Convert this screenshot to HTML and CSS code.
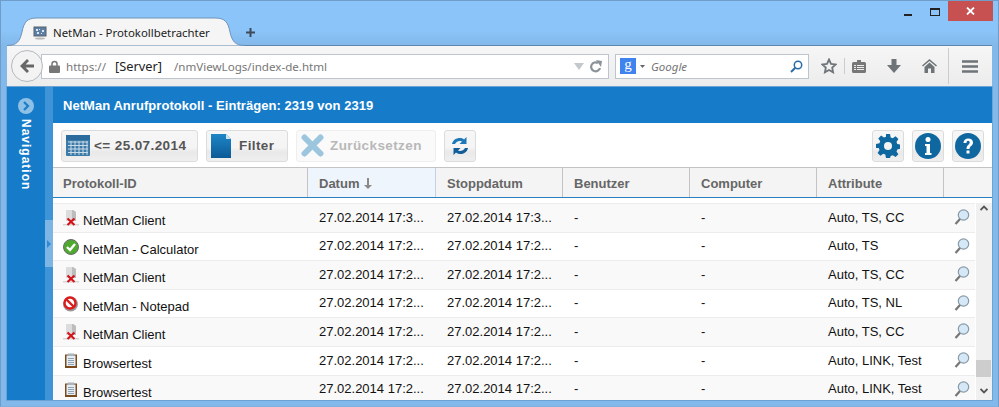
FILE: index.html
```html
<!DOCTYPE html>
<html>
<head>
    <title>NetMan - Protokollbetrachter</title>
    <link rel="stylesheet" href="styles.css">
</head>
<body>
    <div class="window">
        <div class="titlebar">
            <div class="tab">
                <svg class="tab-shape" width="238" height="29" viewBox="0 0 238 29"><path d="M0 28.500C10 28.500 13 24 15 15C17 5 20 1 30 1H208C218 1 221 5 223 15C225 24 228 28.500 238 28.500" fill="#f5f5f5" stroke="#6f94bb"/></svg>
                <svg class="tab-icon" width="14" height="14" viewBox="0 0 14 14"><rect x="1" y="1" width="12" height="9" fill="#5c7fa3" stroke="#56606c"/><path d="M3 3h2v2H3zM6 3h1v1H6zM9 4h2v2H9zM4 6h2v2H4zM8 7h1v1H8z" fill="#dbe7f4"/><ellipse cx="7" cy="12.500" rx="5" ry="1" fill="#b8b8b8"/></svg>
                <span class="tab-title">NetMan - Protokollbetrachter</span>
            </div>
            <svg class="new-tab" width="11" height="11" viewBox="0 0 11 11"><path d="M5.500 1v9M1 5.500h9" stroke="#3f4b59" stroke-width="2"/></svg>
            <div class="winbtns">
                <svg class="win-min" width="8" height="2" viewBox="0 0 8 2"><rect width="8" height="2" fill="#222"/></svg>
                <svg class="win-max" width="10" height="8" viewBox="0 0 10 8"><rect x=".5" y=".5" width="9" height="7" fill="none" stroke="#222"/><rect x="0" y="0" width="10" height="2" fill="#222"/></svg>
                <div class="win-close">
                    <svg width="9" height="8" viewBox="0 0 9 8"><path d="M1 .5l7 7M8 .5l-7 7" stroke="#fff" stroke-width="1.800"/></svg>
                </div>
            </div>
        </div>

        <div class="navbar">
            <div class="back-btn">
                <svg width="16" height="14" viewBox="0 0 16 14"><path d="M8 0L1 7l7 7 2-2-3.500-3.500H15v-3H6.500L10 2z" fill="#666"/></svg>
            </div>
            <div class="urlbar">
                <svg class="lock" width="11" height="13" viewBox="0 0 11 13"><path d="M3 6V4a2.500 2.500 0 0 1 5 0v2" fill="none" stroke="#777" stroke-width="1.500"/><rect y="5.500" width="11" height="7.500" rx="1" fill="#777"/></svg>
                <span class="url-scheme">https://</span>
                <span class="url-host">[Server]</span>
                <span class="url-path">/nmViewLogs/index-de.html</span>
                <span class="url-spacer"></span>
                <svg width="10" height="7" viewBox="0 0 10 7"><path d="M0 0h10L5 7z" fill="#c3c8cd"/></svg>
                <svg class="reload" width="12" height="13" viewBox="0 0 12 13"><path d="M10 8a4.500 4.500 0 1 1-2-5" fill="none" stroke="#8b9298" stroke-width="2.200"/><path d="M6 0l6 1-1 6z" fill="#8b9298"/></svg>
            </div>
            <div class="searchbar">
                <span class="g-logo">g</span>
                <svg class="g-arrow" width="5" height="3" viewBox="0 0 5 3"><path d="M0 0h5L2.500 3z" fill="#666"/></svg>
                <span class="search-text">Google</span>
                <span class="url-spacer"></span>
                <svg width="13" height="13" viewBox="0 0 13 13"><circle cx="8" cy="5" r="3.700" fill="none" stroke="#2a6ca8" stroke-width="1.500"/><path d="M5.300 7.700L1 12" stroke="#2a6ca8" stroke-width="2"/></svg>
            </div>
            <svg class="tool star" width="16" height="16" viewBox="0 0 16 16"><path d="M8 1.500l2 4.300 4.700.6-3.500 3.200.9 4.700L8 12l-4.100 2.300.9-4.700L1.300 6.400 6 5.800z" fill="none" stroke="#6f7479" stroke-width="1.800"/></svg>
            <span class="tool-sep"></span>
            <svg class="tool clip" width="14" height="13" viewBox="0 0 14 13"><path d="M1.500 2H5V0h4v2h3.500A1.500 1.500 0 0 1 14 3.500v8a1.500 1.500 0 0 1-1.500 1.500h-11A1.500 1.500 0 0 1 0 11.500v-8A1.500 1.500 0 0 1 1.500 2z" fill="#777"/><path d="M2 5h2v1H2zM5 5h7v1H5zM2 7h2v1H2zM5 7h7v1H5zM2 9h2v1H2zM5 9h7v1H5z" fill="#eee"/></svg>
            <svg class="tool down" width="14" height="14" viewBox="0 0 14 14"><path d="M4.500 0h5v6H14l-7 8-7-8h4.500z" fill="#6f7479"/></svg>
            <svg class="tool home" width="15" height="14" viewBox="0 0 15 14"><path d="M7.500 0L15 6.500l-1 1-6.500-5.500L1 7.500l-1-1zM2.500 8l5-4.500 5 4.500v6H9V9.500H6V14H2.500z" fill="#6f7479"/></svg>
            <span class="tool-sep tall"></span>
            <svg class="tool menu" width="16" height="13" viewBox="0 0 16 13"><path d="M0 1.500h16M0 6.500h16M0 11.500h16" stroke="#6f7479" stroke-width="2.600"/></svg>
        </div>

        <div class="page">
            <div class="nav-panel">
                <svg class="nav-expand" width="16" height="16" viewBox="0 0 16 16"><circle cx="8" cy="8" r="8" fill="#8fc0e6"/><path d="M6 4l4 4-4 4" fill="none" stroke="#1a7ecb" stroke-width="2.200"/></svg>
                <span class="nav-label">Navigation</span>
            </div>
            <div class="splitter">
                <div class="split-handle">
                    <svg width="4" height="8" viewBox="0 0 4 8"><path d="M0 0l4 4-4 4z" fill="#2f8bd0"/></svg>
                </div>
            </div>
            <div class="main">
                <div class="main-title">NetMan Anrufprotokoll - Einträgen: 2319 von 2319</div>
                <div class="toolbar">
                    <button class="btn btn-date">
                        <svg width="24" height="21" viewBox="0 0 24 21"><rect width="24" height="21" rx="1" fill="#3c7aa8"/><rect width="24" height="5" fill="#2a6a9c"/><path d="M2 7h20M2 10.500h20M2 14h20M2 17.500h20M5 6v14M9 6v14M13 6v14M17 6v14M21 6v14" stroke="#c9dcea" stroke-width="1"/></svg>
                        &lt;= 25.07.2014
                    </button>
                    <button class="btn btn-filter">
                        <svg width="20" height="24" viewBox="0 0 20 24"><defs><linearGradient id="fg" x1="0" y1="0" x2="0" y2="1"><stop offset="0" stop-color="#1f86c6"/><stop offset="1" stop-color="#0b5a96"/></linearGradient></defs><path d="M0 0h15l5 5v19H0z" fill="url(#fg)"/><path d="M15 0l5 5h-5z" fill="#cfe2f0"/></svg>
                        Filter
                    </button>
                    <button class="btn btn-reset">
                        <svg width="23" height="23" viewBox="0 0 23 23"><path d="M3.500 3.500l16 16M19.500 3.500l-16 16" stroke="#9cc5de" stroke-width="6" stroke-linecap="round"/></svg>
                        Zurücksetzen
                    </button>
                    <button class="btn btn-icon">
                        <svg width="20" height="20" viewBox="0 0 20 20"><path d="M2 8C3 4 6 2 10 2c2 0 3 .6 4 1.400L16.500 1v7h-7l2.500-2.500C11 5 10.500 5 10 5 7.800 5 6 6 5 8z" fill="#1d78b8"/><path d="M18 12c-1 4-4 6-8 6-2 0-3-.6-4-1.400L3.500 19v-7h7L8 14.500c1 .5 1.500.5 2 .5 2.200 0 4-1 5-3z" fill="#0f5d99"/></svg>
                    </button>
                    <span class="toolbar-gap"></span>
                    <button class="btn btn-icon">
                        <svg width="24" height="24" viewBox="0 0 24 24"><path fill="#0f679f" fill-rule="evenodd" d="M10 0h4l.7 3.400 2 .8 2.900-1.900 2.800 2.800-1.900 2.900.8 2 3.400.7v4l-3.400.7-.8 2 1.900 2.900-2.800 2.800-2.900-1.900-2 .8L14 24h-4l-.7-3.400-2-.8-2.900 1.900-2.800-2.800 1.900-2.900-.8-2L0 14v-4l3.400-.7.800-2-1.900-2.900 2.800-2.800 2.900 1.900 2-.8zM12 8a4 4 0 1 0 0 8 4 4 0 0 0 0-8z"/></svg>
                    </button>
                    <button class="btn btn-icon">
                        <svg width="26" height="26" viewBox="0 0 26 26"><circle cx="13" cy="13" r="13" fill="#0f679f"/><circle cx="13" cy="6.500" r="2.500" fill="#fff"/><path d="M10 11h5v9h1.500v2h-6.500v-2h1.500v-7H10z" fill="#fff"/></svg>
                    </button>
                    <button class="btn btn-icon">
                        <svg width="26" height="26" viewBox="0 0 26 26"><circle cx="13" cy="13" r="13" fill="#0f679f"/><path d="M8.500 10c0-3 2-4.500 4.700-4.500S18 7 18 9.500c0 3.500-3.500 3.500-3.500 6.500h-3c0-4 3.200-4.500 3.200-6.500 0-1-.6-1.700-1.600-1.700-1.100 0-1.600.8-1.600 2.200z" fill="#fff"/><rect x="11.500" y="17.500" width="3" height="3" fill="#fff"/></svg>
                    </button>
                </div>
                <div class="thead">
                    <div class="th col-id">Protokoll-ID</div>
                    <div class="th col-date sorted">Datum
                        <svg width="10" height="11" viewBox="0 0 10 11"><path d="M4 0h2v7h3l-4 4-4-4h3z" fill="#8a8a8a"/></svg>
                    </div>
                    <div class="th col-date">Stoppdatum</div>
                    <div class="th col-date">Benutzer</div>
                    <div class="th col-date">Computer</div>
                    <div class="th col-date">Attribute</div>
                    <div class="th col-rest"></div>
                </div>
                <div class="tbody">
                    <div class="rows">
                        <div class="row alt tall">
                            <div class="td col-id"><svg width="16" height="16" viewBox="0 0 16 16"><use href="#ic-client"/></svg><span>NetMan Client</span></div>
                            <div class="td col-date">27.02.2014 17:3...</div><div class="td col-date">27.02.2014 17:3...</div><div class="td col-date">-</div><div class="td col-date">-</div><div class="td col-date">Auto, TS, CC</div>
                            <div class="td col-lens"><svg width="16" height="16" viewBox="0 0 16 16"><use href="#ic-lens"/></svg></div>
                        </div>
                        <div class="row">
                            <div class="td col-id"><svg width="16" height="16" viewBox="0 0 16 16"><use href="#ic-ok"/></svg><span>NetMan - Calculator</span></div>
                            <div class="td col-date">27.02.2014 17:2...</div><div class="td col-date">27.02.2014 17:2...</div><div class="td col-date">-</div><div class="td col-date">-</div><div class="td col-date">Auto, TS</div>
                            <div class="td col-lens"><svg width="16" height="16" viewBox="0 0 16 16"><use href="#ic-lens"/></svg></div>
                        </div>
                        <div class="row alt tall">
                            <div class="td col-id"><svg width="16" height="16" viewBox="0 0 16 16"><use href="#ic-client"/></svg><span>NetMan Client</span></div>
                            <div class="td col-date">27.02.2014 17:2...</div><div class="td col-date">27.02.2014 17:2...</div><div class="td col-date">-</div><div class="td col-date">-</div><div class="td col-date">Auto, TS, CC</div>
                            <div class="td col-lens"><svg width="16" height="16" viewBox="0 0 16 16"><use href="#ic-lens"/></svg></div>
                        </div>
                        <div class="row">
                            <div class="td col-id"><svg width="16" height="16" viewBox="0 0 16 16"><use href="#ic-stop"/></svg><span>NetMan - Notepad</span></div>
                            <div class="td col-date">27.02.2014 17:2...</div><div class="td col-date">27.02.2014 17:2...</div><div class="td col-date">-</div><div class="td col-date">-</div><div class="td col-date">Auto, TS, NL</div>
                            <div class="td col-lens"><svg width="16" height="16" viewBox="0 0 16 16"><use href="#ic-lens"/></svg></div>
                        </div>
                        <div class="row alt tall">
                            <div class="td col-id"><svg width="16" height="16" viewBox="0 0 16 16"><use href="#ic-client"/></svg><span>NetMan Client</span></div>
                            <div class="td col-date">27.02.2014 17:2...</div><div class="td col-date">27.02.2014 17:2...</div><div class="td col-date">-</div><div class="td col-date">-</div><div class="td col-date">Auto, TS, CC</div>
                            <div class="td col-lens"><svg width="16" height="16" viewBox="0 0 16 16"><use href="#ic-lens"/></svg></div>
                        </div>
                        <div class="row tall">
                            <div class="td col-id"><svg width="16" height="16" viewBox="0 0 16 16"><use href="#ic-clip"/></svg><span>Browsertest</span></div>
                            <div class="td col-date">27.02.2014 17:2...</div><div class="td col-date">27.02.2014 17:2...</div><div class="td col-date">-</div><div class="td col-date">-</div><div class="td col-date">Auto, LINK, Test</div>
                            <div class="td col-lens"><svg width="16" height="16" viewBox="0 0 16 16"><use href="#ic-lens"/></svg></div>
                        </div>
                        <div class="row alt">
                            <div class="td col-id"><svg width="16" height="16" viewBox="0 0 16 16"><use href="#ic-clip"/></svg><span>Browsertest</span></div>
                            <div class="td col-date">27.02.2014 17:2...</div><div class="td col-date">27.02.2014 17:2...</div><div class="td col-date">-</div><div class="td col-date">-</div><div class="td col-date">Auto, LINK, Test</div>
                            <div class="td col-lens"><svg width="16" height="16" viewBox="0 0 16 16"><use href="#ic-lens"/></svg></div>
                        </div>
                    </div>
                    <div class="scrollbar">
                        <svg width="8" height="6" viewBox="0 0 8 6"><path d="M.5 5L4 1.500 7.500 5" fill="none" stroke="#555" stroke-width="1.800"/></svg>
                        <div class="scroll-thumb"></div>
                        <svg width="8" height="6" viewBox="0 0 8 6"><path d="M.5 1L4 4.500 7.500 1" fill="none" stroke="#555" stroke-width="1.800"/></svg>
                    </div>
                </div>
            </div>
        </div>
    </div>

    <!-- Symbole fuer die Tabelle -->
    <svg class="defs" width="0" height="0">
        <symbol id="ic-client" viewBox="0 0 16 16">
            <path d="M3 0h7l3 2v9H3z" fill="#dcdcdc"/><path d="M9 0h1l3 2v9H9z" fill="#bdbdbd"/><path d="M0 14h16v1.500H0z" fill="#d6d6d6"/>
            <path d="M4.500 8.500l7 6.500M11.500 8.500l-7 6.500" stroke="#d3121a" stroke-width="2.200"/>
        </symbol>
        <symbol id="ic-ok" viewBox="0 0 16 16">
            <circle cx="8" cy="8" r="7.500" fill="#4fa92f" stroke="#6b6b6b"/><path d="M4 8l3 3 5-6" fill="none" stroke="#fff" stroke-width="2.400"/>
        </symbol>
        <symbol id="ic-stop" viewBox="0 0 16 16">
            <circle cx="7.500" cy="8" r="7.500" fill="#9a9a9a"/><circle cx="7" cy="7" r="5.500" fill="#fff" stroke="#dc1c1c" stroke-width="2.400"/><path d="M3 3l8 8" stroke="#dc1c1c" stroke-width="2.400"/>
        </symbol>
        <symbol id="ic-clip" viewBox="0 0 16 16">
            <rect x="2" y="1.500" width="12" height="13.500" fill="#7a4a1c"/><rect x="3.500" y="2.500" width="9" height="10.500" fill="#e6edf3"/><path d="M5 5.500h6M5 7.500h6M5 9.500h6M5 11.500h6" stroke="#8fa3b3"/><rect x="5" y="0.500" width="6" height="2.500" fill="#a9b4bd"/>
        </symbol>
        <symbol id="ic-lens" viewBox="0 0 16 16">
            <circle cx="9.500" cy="6" r="5.200" fill="#d5e8f8" stroke="#8a9aa6" stroke-width="1.200"/><path d="M6 10L1.500 15" stroke="#777" stroke-width="2.200"/>
        </symbol>
    </svg>
</body>
</html>
```

FILE: styles.css
```css
* {
    box-sizing: border-box;
}

html, body {
    margin: 0;
    height: 100%;
    overflow: hidden;
}

body {
    background-color: #8bc4f8;
    font-family: "Liberation Sans", Arial, sans-serif;
}

.defs {
    display: block;
    height: 0;
}

.window {
    display: flex;
    flex-direction: column;
    width: 999px;
    height: 407px;
    padding: 0 6px 6px 6px;
    border: 1px solid #6f9cc9;
    border-bottom-color: #7fb0de;
    background: linear-gradient(#8bc4f8 0, #8bc4f8 30px, #83b8ea 44px);
}

.window svg {
    flex: none;
}

/* Titelleiste */
.titlebar {
    display: flex;
    align-items: flex-start;
    height: 44px;
    flex: none;
    padding-top: 16px;
    margin-right: -1px;
}

.tab {
    position: relative;
    display: flex;
    align-items: center;
    width: 238px;
    height: 29px;
    padding: 2px 0 0 26px;
    z-index: 1;
}

.tab-shape {
    position: absolute;
    top: 0;
    left: 0;
}

.tab-icon, .tab-title {
    position: relative;
}

.tab-title {
    margin-left: 6px;
    font-family: "Noto Sans", sans-serif;
    font-size: 11.400px;
    color: #1c1c1c;
    white-space: nowrap;
}

.new-tab {
    margin: 10px 0 0 0;
}

.winbtns {
    display: flex;
    align-items: flex-start;
    margin: -16px 0 0 auto;
}

.win-min {
    margin: 13px 18px 0 0;
}

.win-max {
    margin: 7px 8px 0 0;
}

.win-close {
    display: flex;
    align-items: center;
    justify-content: center;
    width: 45px;
    height: 20px;
    background-color: #c75050;
}

/* Navigationsleiste */
.navbar {
    display: flex;
    align-items: center;
    flex: none;
    height: 42px;
    padding-left: 4px;
    background: linear-gradient(#f6f6f6, #ececec);
    border-top: 1px solid #5f86ad;
    border-bottom: 1px solid #a9adb1;
}

.back-btn {
    display: flex;
    align-items: center;
    justify-content: center;
    width: 32px;
    height: 32px;
    flex: none;
    border: 1px solid #b5b9bd;
    border-radius: 50%;
    background-color: #f3f3f3;
    position: relative;
    z-index: 1;
}

.urlbar, .searchbar {
    display: flex;
    align-items: center;
    height: 25px;
    background-color: #fff;
    border: 1px solid #bcc5cd;
}

.urlbar {
    width: 568px;
    margin-left: -2px;
    padding: 0 6px 0 7px;
    font-family: "Noto Sans", sans-serif;
    font-size: 11.600px;
}

.lock {
    margin-right: 6px;
}

.url-scheme, .url-path {
    color: #777;
}

.url-host {
    margin: 0 12px 0 9px;
    font-size: 12.800px;
    color: #222;
}

.url-spacer {
    flex: 1;
}

.reload {
    margin-left: 6px;
}

.searchbar {
    width: 194px;
    margin-left: 6px;
    padding: 0 5px 0 4px;
}

.g-logo {
    display: block;
    width: 16px;
    height: 16px;
    background-color: #3f83ee;
    color: #fff;
    font-family: "Liberation Serif", serif;
    font-size: 15px;
    line-height: 13px;
    text-align: center;
}

.g-arrow {
    margin-left: 4px;
}

.search-text {
    margin-left: 6px;
    font-family: "Noto Sans", sans-serif;
    font-size: 11.500px;
    font-style: italic;
    color: #777;
}

.tool.star {
    margin-left: 12px;
}

.tool-sep {
    width: 1px;
    height: 16px;
    margin: 0 7px;
    background-color: #c9cdd1;
}

.tool-sep.tall {
    height: 36px;
    margin: 0 13px 0 11px;
}

.tool.down {
    margin-left: 21px;
}

.tool.home {
    margin-left: 21px;
}

/* Seite */
.page {
    display: flex;
    flex: 1;
    min-height: 0;
    background-color: #fff;
    box-shadow: 0 0 0 1px #6ba3d6;
}

.nav-panel {
    display: flex;
    flex-direction: column;
    align-items: center;
    width: 38px;
    flex: none;
    padding-top: 11px;
    background-color: #167cc9;
}

.nav-label {
    margin-top: 5px;
    writing-mode: vertical-rl;
    font-size: 12px;
    font-weight: bold;
    letter-spacing: 1px;
    color: #fff;
}

.splitter {
    position: relative;
    width: 8px;
    flex: none;
    background-color: #3f94d8;
}

.split-handle {
    position: absolute;
    top: 133px;
    left: 0;
    display: flex;
    align-items: center;
    justify-content: center;
    width: 8px;
    height: 47px;
    background-color: #7db5e4;
}

.main {
    display: flex;
    flex-direction: column;
    flex: 1;
    min-width: 0;
}

.main-title {
    flex: none;
    height: 36px;
    padding: 11px 0 0 10px;
    background-color: #167cc9;
    color: #fff;
    font-size: 13px;
    font-weight: bold;
    letter-spacing: .05px;
}

.toolbar {
    display: flex;
    align-items: center;
    flex: none;
    gap: 8px;
    height: 44px;
    padding: 1px 8px 0 8px;
    background-color: #fff;
}

.toolbar-gap {
    flex: 1;
}

.btn {
    display: flex;
    align-items: center;
    height: 32px;
    padding: 0 4px;
    border: 1px solid #dcdcdc;
    border-radius: 3px;
    background: linear-gradient(#f6f6f6 0, #f4f4f4 55%, #e9e9e9 70%, #efefef 100%);
    color: #555;
    font-family: "Liberation Sans", Arial, sans-serif;
    font-size: 13.500px;
    font-weight: bold;
    letter-spacing: .4px;
}

.btn-date {
    width: 137px;
    gap: 4px;
}

.btn-filter {
    width: 82px;
    gap: 8px;
}

.btn-reset {
    width: 140px;
    gap: 6px;
    color: #b8b8b8;
    background: #fafafa;
    border-color: #eee;
}

.btn-icon {
    justify-content: center;
    width: 32px;
    padding: 0;
}

/* Tabelle */
.thead {
    display: flex;
    flex: none;
    height: 31px;
    padding-bottom: 0;
    background-color: #f4f4f4;
    border-top: 1px solid #c3c3c3;
    border-bottom: 1px solid #2a7fc0;
}

.th {
    display: flex;
    align-items: center;
    gap: 4px;
    padding: 2px 0 0 11px;
    border-right: 1px solid #c3c3c3;
    color: #666;
    font-size: 13px;
    font-weight: bold;
}

.th.col-id {
    padding-left: 10px;
}

.th.sorted {
    width: 128px;
    background-color: #eef5fc;
    border-right-color: #c0d4e6;
}

.col-id {
    width: 255px;
    flex: none;
}

.col-date {
    width: 127px;
    flex: none;
}

.col-rest {
    flex: 1;
    border-right: none;
}

.tbody {
    display: flex;
    flex: 1;
    min-height: 0;
    padding-top: 5px;
}

.rows {
    width: 922px;
    flex: none;
    overflow: hidden;
}

.row {
    display: flex;
    height: 28px;
    border-top: 1px solid #ececec;
    font-size: 13px;
    color: #111;
}

.row.tall {
    height: 29px;
}

.row.alt {
    background-color: #f9f9f9;
}

.td {
    display: flex;
    align-items: center;
    padding: 0 0 2px 11px;
    white-space: nowrap;
}

.td.col-date:nth-child(2) {
    width: 128px;
}

.td.col-id {
    padding: 0 0 0 10px;
    gap: 4px;
}

.td.col-id span {
    padding-top: 5px;
}

.col-lens {
    flex: 1;
    padding: 0 0 2px 10px;
}

.scrollbar {
    display: flex;
    flex-direction: column;
    align-items: center;
    justify-content: space-between;
    flex: 1;
    margin-left: 1px;
    padding: 2px 0 6px 0;
    background-color: #f0f0f0;
    position: relative;
}

.scroll-thumb {
    position: absolute;
    right: 1px;
    bottom: 23px;
    width: 15px;
    height: 17px;
    background-color: #cdcdcd;
}
```
